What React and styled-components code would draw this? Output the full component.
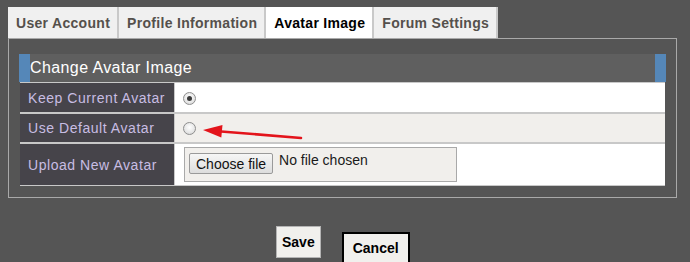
import React from 'react';
import styled, { createGlobalStyle } from 'styled-components';

const GlobalStyle = createGlobalStyle`
  html, body {
    margin: 0;
    padding: 0;
    background: #555555;
  }
  body {
    font-family: "Liberation Sans", Arial, sans-serif;
  }
`;

const Page = styled.div`
  width: 690px;
  height: 262px;
  box-sizing: border-box;
  padding: 7px 0 0 8px;
  overflow: hidden;
  background: #555555;
`;

const TabBar = styled.div`
  display: flex;
  height: 31px;
`;

const Tab = styled.div`
  height: 31px;
  line-height: 32px;
  padding: 0 7px 0 8px;
  background: ${p => (p.active ? '#ffffff' : '#f0f0f0')};
  color: ${p => (p.active ? '#000000' : '#55504c')};
  border-right: 2px solid #c9c9c9;
  font-size: 14px;
  font-weight: bold;
  letter-spacing: 0.3px;
  white-space: nowrap;
`;

const Panel = styled.div`
  width: 669px;
  height: 160px;
  box-sizing: border-box;
  border: 1px solid #a9a9a9;
  padding: 15px 10px 11px 10px;
`;

const PanelTitle = styled.div`
  height: 28px;
  line-height: 28px;
  background: #5f5f5f;
  border-left: 11px solid #5587b8;
  border-right: 11px solid #5587b8;
  color: #ffffff;
  font-size: 16px;
  letter-spacing: 0.4px;
`;

const Grid = styled.div`
  margin: 0 1px;
  display: grid;
  grid-template-columns: 154px 1fr;
  grid-template-rows: 29px 28px 41px;
  column-gap: 1px;
  row-gap: 2px;
  padding: 1px 0;
  background: #c8c8c8;
`;

const Label = styled.div`
  background: #46444a;
  color: #c8bde3;
  font-size: 14px;
  letter-spacing: 0.55px;
  padding-left: 8px;
  display: flex;
  align-items: center;
`;

const Value = styled.div`
  position: relative;
  background: ${p => (p.shaded ? '#f1efec' : '#ffffff')};
  display: flex;
  align-items: center;
  padding-left: ${p => (p.wide ? '9px' : '8px')};
  padding-top: ${p => (p.nudge ? '2px' : '0')};
`;

const Radio = styled.span`
  width: 11px;
  height: 11px;
  border-radius: 50%;
  border: 1px solid #8e8e8e;
  background: radial-gradient(circle at 50% 40%, #ffffff 0%, #e6e6e6 60%, #cfcfcf 100%);
  display: flex;
  align-items: center;
  justify-content: center;
  &::after {
    content: '';
    width: 5px;
    height: 5px;
    border-radius: 50%;
    background: ${p => (p.checked ? '#3a3a3a' : 'transparent')};
  }
`;

const Arrow = styled.svg`
  position: absolute;
  left: 25px;
  top: 6px;
`;

const FileBox = styled.div`
  width: 273px;
  height: 35px;
  box-sizing: border-box;
  border: 1px solid #a9a9a9;
  background: #f1efec;
  padding: 5px 4px;
  display: flex;
  align-items: flex-start;
  gap: 6px;
`;

const FileButton = styled.span`
  height: 21px;
  line-height: 20px;
  box-sizing: border-box;
  padding: 0 6px;
  border: 1px solid #9a9a9a;
  border-radius: 2px;
  background: linear-gradient(#f6f6f6, #dddddd);
  color: #111;
  font-size: 14px;
  white-space: nowrap;
`;

const FileText = styled.span`
  font-size: 14px;
  line-height: 16px;
  margin-top: -1px;
  color: #1a1a1a;
  white-space: nowrap;
`;

const Actions = styled.div`
  display: flex;
  align-items: flex-start;
  gap: 21px;
  padding: 28px 0 0 268px;
`;

const Button = styled.div`
  height: 32px;
  box-sizing: border-box;
  padding: 0 ${p => (p.primary ? '5px' : '9px')};
  margin-top: ${p => (p.primary ? '0' : '6px')};
  border: ${p => (p.primary ? '1px solid #b4b4b4' : '2px solid #000000')};
  background: #f1f0ed;
  color: #000;
  font-size: 14px;
  font-weight: bold;
  line-height: ${p => (p.primary ? '30px' : '28px')};
  white-space: nowrap;
`;

const tabs = ['User Account', 'Profile Information', 'Avatar Image', 'Forum Settings'];

export default function App() {
  return (
    <Page>
      <GlobalStyle />
      <TabBar>
        {tabs.map(t => (
          <Tab key={t} active={t === 'Avatar Image' ? 1 : 0}>{t}</Tab>
        ))}
      </TabBar>
      <Panel>
        <PanelTitle>Change Avatar Image</PanelTitle>
        <Grid>
          <Label>Keep Current Avatar</Label>
          <Value nudge={1}>
            <Radio checked={1} />
          </Value>
          <Label>Use Default Avatar</Label>
          <Value shaded={1}>
            <Radio />
            <Arrow width="105" height="24" viewBox="0 0 105 24">
              <line x1="18" y1="11.2" x2="101" y2="18" stroke="#e3141b" strokeWidth="2.6" strokeLinecap="round" />
              <polygon points="3,10 22.5,5 21.3,17.5" fill="#e3141b" />
            </Arrow>
          </Value>
          <Label>Upload New Avatar</Label>
          <Value wide={1}>
            <FileBox>
              <FileButton>Choose file</FileButton>
              <FileText>No file chosen</FileText>
            </FileBox>
          </Value>
        </Grid>
      </Panel>
      <Actions>
        <Button primary={1}>Save</Button>
        <Button>Cancel</Button>
      </Actions>
    </Page>
  );
}
